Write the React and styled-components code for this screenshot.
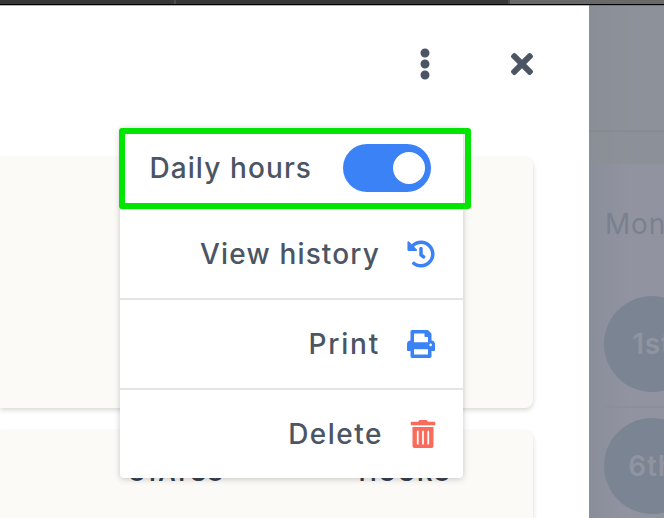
import { useState } from "react";
import styled, { createGlobalStyle } from "styled-components";
import {
  FaEllipsisV,
  FaTimes,
  FaHistory,
  FaPrint,
  FaTrashAlt,
} from "react-icons/fa";

const GlobalStyle = createGlobalStyle`
  * {
    box-sizing: border-box;
  }
  body {
    margin: 0;
    overflow: hidden;
    font-family: Inter, "Liberation Sans", sans-serif;
    color: #4b5563;
  }
`;

const Page = styled.div`
  display: flex;
  flex-direction: column;
  width: 664px;
  height: 518px;
  overflow: hidden;
`;

const BrowserBar = styled.div`
  display: flex;
  flex: none;
  height: 5px;
  border-bottom: 1px solid #000;
`;

const BrowserTab = styled.div`
  width: ${({ $width }) => $width}px;
  border-right: 2px solid ${({ $active }) => ($active ? "#696969" : "#4c4c4c")};
  background: ${({ $active }) => ($active ? "#696969" : "#383838")};
`;

const Content = styled.div`
  display: flex;
  flex: 1;
  min-height: 0;
`;

const Drawer = styled.main`
  position: relative;
  flex: none;
  width: 589px;
  background: #fff;
  border-top: 1px solid #b5b5b5;
`;

const DrawerHeader = styled.header`
  display: flex;
  align-items: center;
  justify-content: flex-end;
  gap: 65px;
  height: 152px;
  padding: 0 51px 36px 0;
`;

const IconButton = styled.button`
  display: flex;
  padding: 0;
  border: 0;
  background: none;
  color: #4b5563;
  font-size: 32px;
`;

const Card = styled.section`
  width: 533px;
  height: ${({ $height }) => $height}px;
  margin-bottom: 23px;
  border-radius: 0 8px 8px 0;
  background: #fbfaf6;
  box-shadow: 0 2px 5px rgba(0, 0, 0, 0.16);
`;

const CardHeadings = styled.div`
  display: flex;
  justify-content: space-between;
  padding: 27px 82px 0 129px;
  font-size: 24px;
  line-height: 30px;
  font-weight: 600;
  color: #374151;
`;

const Heading = styled.span`
  letter-spacing: ${({ $spacing }) => $spacing || 0}px;
`;

const Menu = styled.div`
  position: absolute;
  top: 122px;
  left: 120px;
  width: 343px;
  border-radius: 4px;
  background: #fff;
  box-shadow: 0 1px 6px rgba(0, 0, 0, 0.22);
`;

const MenuItem = styled.div`
  display: flex;
  align-items: center;
  justify-content: flex-end;
  gap: ${({ $gap }) => $gap || 28}px;
  height: ${({ $height }) => $height || 90}px;
  padding-right: ${({ $danger }) => ($danger ? 26 : 28)}px;
  border-bottom: ${({ $last }) => ($last ? "0" : "2px solid #e5e5e5")};

  svg {
    flex: none;
    width: 28px;
    height: 28px;
    color: ${({ $danger }) => ($danger ? "#fa6b5b" : "#3b82f6")};
  }
`;

const Label = styled.span`
  margin-right: -1px;
  font-size: 28px;
  line-height: 36px;
  font-weight: 500;
  white-space: nowrap;
  letter-spacing: ${({ $spacing }) => $spacing}px;
`;

const Switch = styled.button`
  display: flex;
  align-items: center;
  justify-content: ${({ $on }) => ($on ? "flex-end" : "flex-start")};
  width: 88px;
  height: 48px;
  margin-right: 4px;
  padding: 0 6px;
  border: 0;
  border-radius: 24px;
  background: ${({ $on }) => ($on ? "#3b82f6" : "#d1d5db")};
`;

const Knob = styled.span`
  width: 32px;
  height: 32px;
  border-radius: 50%;
  background: #fff;
`;

const Highlight = styled.div`
  position: absolute;
  top: 122px;
  left: 119px;
  width: 352px;
  height: 81px;
  border: 6px solid #00e600;
  border-radius: 3px;
`;

const Backdrop = styled.aside`
  flex: 1;
  overflow: hidden;
  border-top: 1px solid #777a80;
  background:
    linear-gradient(90deg, rgba(110, 118, 132, 0.2), transparent 40px),
    #9194a0;
`;

const BackdropTop = styled.div`
  height: 126px;
  background: rgba(138, 144, 149, 0.6);
  border-bottom: 2px solid #878b94;
`;

const BackdropSpacer = styled.div`
  height: 32px;
  background: rgba(138, 144, 149, 0.7);
`;

const Weekday = styled.div`
  height: 120px;
  padding: 42px 0 0 16px;
  font-size: 28px;
  line-height: 36px;
  letter-spacing: 0.8px;
  color: #7b808e;
`;

const DayRow = styled.div`
  height: 122px;
  margin-left: 15px;
  padding-top: 10px;
  border-top: 2px solid ${({ $line }) => ($line ? "#8b8f99" : "transparent")};
`;

const Day = styled.div`
  display: flex;
  align-items: center;
  justify-content: center;
  width: 96px;
  height: 96px;
  border-radius: 50%;
  background: #7a8492;
  color: #9094a0;
  font-size: 28px;
  font-weight: 600;
  letter-spacing: 0.8px;
`;

export default function App() {
  const [dailyHours, setDailyHours] = useState(true);

  return (
    <Page>
      <GlobalStyle />
      <BrowserBar>
        <BrowserTab $width={176} />
        <BrowserTab $width={334} />
        <BrowserTab $width={154} $active />
      </BrowserBar>
      <Content>
        <Drawer>
          <DrawerHeader>
            <IconButton aria-label="More">
              <FaEllipsisV />
            </IconButton>
            <IconButton aria-label="Close">
              <FaTimes />
            </IconButton>
          </DrawerHeader>
          <Card $height={250} />
          <Card $height={250}>
            <CardHeadings>
              <Heading>STATUS</Heading>
              <Heading $spacing={1.4}>HOURS</Heading>
            </CardHeadings>
          </Card>
          <Menu>
            <MenuItem $gap={32} $height={82}>
              <Label $spacing={1.1}>Daily hours</Label>
              <Switch
                $on={dailyHours}
                onClick={() => setDailyHours(!dailyHours)}
              >
                <Knob />
              </Switch>
            </MenuItem>
            <MenuItem>
              <Label $spacing={1.15}>View history</Label>
              <FaHistory />
            </MenuItem>
            <MenuItem>
              <Label $spacing={1.8}>Print</Label>
              <FaPrint />
            </MenuItem>
            <MenuItem $gap={27} $height={88} $danger $last>
              <Label $spacing={1.5}>Delete</Label>
              <FaTrashAlt />
            </MenuItem>
          </Menu>
          <Highlight />
        </Drawer>
        <Backdrop>
          <BackdropTop />
          <BackdropSpacer />
          <Weekday>Mon</Weekday>
          <DayRow>
            <Day>1st</Day>
          </DayRow>
          <DayRow $line>
            <Day>6th</Day>
          </DayRow>
        </Backdrop>
      </Content>
    </Page>
  );
}
